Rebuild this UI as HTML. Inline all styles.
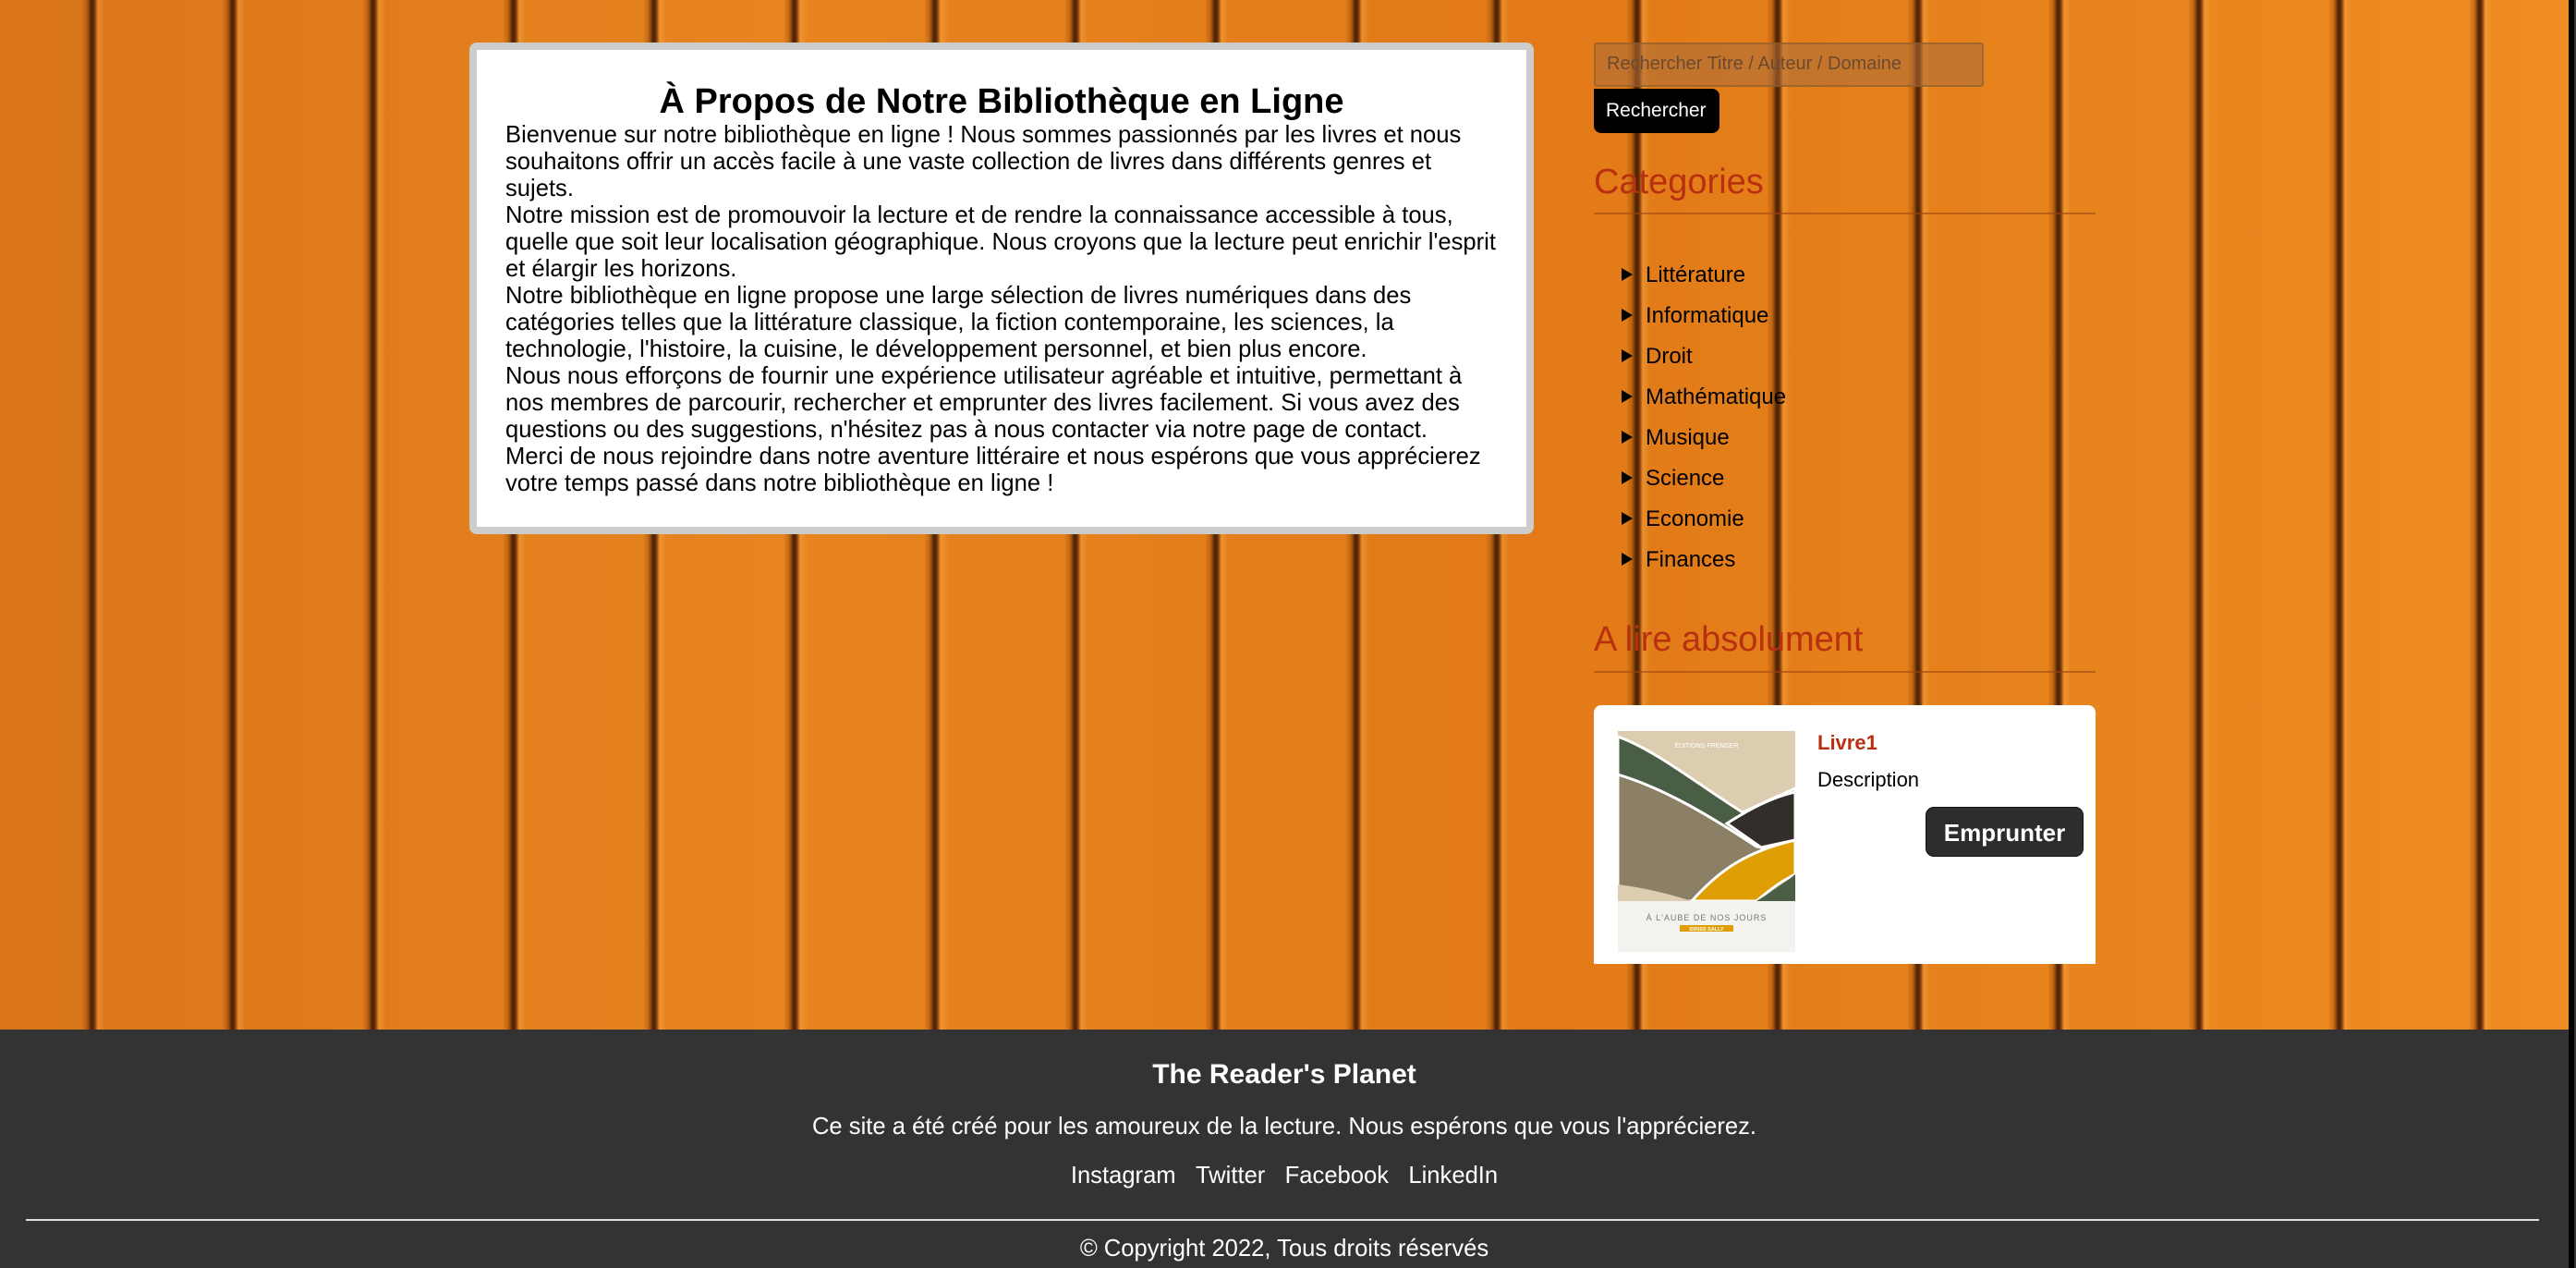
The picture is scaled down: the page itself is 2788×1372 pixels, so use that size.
<!DOCTYPE html>
<html><head><meta charset="utf-8">
<style>
*{margin:0;padding:0;box-sizing:border-box}
html,body{width:2788px;height:1372px;overflow:hidden}
body{font-family:"Liberation Sans",Arial,sans-serif;background:#333;position:relative}
.wood{position:absolute;left:0;top:0;width:2780px;height:1114px;
background:
repeating-linear-gradient(90deg,rgba(0,0,0,0) 0px,rgba(0,0,0,0) 88px,rgba(120,50,0,.35) 94px,#4a2205 99px,#6a3008 102px,rgba(255,180,80,.35) 106px,rgba(0,0,0,0) 114px,rgba(0,0,0,0) 152px),
linear-gradient(90deg,#d9741a,#e8851f 30%,#e17a17 60%,#ee8c22);
background-position:0 0}
.edge{position:absolute;left:2780px;top:0;width:6px;height:1372px;background:#000}
.edge2{position:absolute;left:2786px;top:0;width:2px;height:1372px;background:#333}
.about{position:absolute;left:508px;top:46px;width:1152px;height:532px;background:#fff;border:8px solid #ccc;border-radius:8px}
.about h1{position:absolute;left:0;right:0;top:34px;text-align:center;font-size:38px;font-weight:bold;line-height:44px}
.about .txt{position:absolute;left:31px;top:78px;font-size:25.6px;line-height:29px;white-space:nowrap;color:#000}
.search{position:absolute;left:1725px;top:46px;width:422px;height:48px;background:rgba(170,110,60,.55);border:2px solid rgba(140,90,40,.6);border-radius:3px;font-size:20px;color:#6b4a30;padding:10px 12px}
.btn{position:absolute;left:1725px;top:96px;width:136px;height:48px;background:#000;color:#fff;font-size:21px;border-radius:0 8px 8px 8px;padding:12px 13px}
h2{position:absolute;left:1725px;font-size:38px;font-weight:normal;color:#b8300f}
.hr{position:absolute;left:1725px;width:543px;height:2px;background:rgba(160,70,20,.6)}
ul{position:absolute;left:1755px;top:282px;list-style:none}
li{font-size:24px;height:44px;line-height:32px;color:#000;position:relative;padding-left:26px}
li:before{content:"";position:absolute;left:0;top:8px;border-left:12px solid #000;border-top:7px solid transparent;border-bottom:7px solid transparent}
.card{position:absolute;left:1725px;top:763px;width:543px;height:280px;background:#fff;border-radius:8px 8px 0 0}
.cover{position:absolute;left:26px;top:28px}
.t1{position:absolute;left:242px;top:28px;font-size:22px;font-weight:bold;color:#b8300f}
.t2{position:absolute;left:242px;top:68px;font-size:22px;color:#000}
.emp{position:absolute;left:359px;top:110px;width:171px;height:54px;background:#2d2d2d;color:#fff;font-weight:bold;font-size:26px;border-radius:9px;text-align:center;line-height:54px;border:1px solid #111}
.f{position:absolute;left:0;width:2780px;text-align:center;color:#fff}
</style></head><body>
<div class="wood"></div>
<div class="edge"></div><div class="edge2"></div>
<div class="about">
<h1>À Propos de Notre Bibliothèque en Ligne</h1>
<div class="txt">Bienvenue sur notre bibliothèque en ligne ! Nous sommes passionnés par les livres et nous<br>souhaitons offrir un accès facile à une vaste collection de livres dans différents genres et<br>sujets.<br>Notre mission est de promouvoir la lecture et de rendre la connaissance accessible à tous,<br>quelle que soit leur localisation géographique. Nous croyons que la lecture peut enrichir l'esprit<br>et élargir les horizons.<br>Notre bibliothèque en ligne propose une large sélection de livres numériques dans des<br>catégories telles que la littérature classique, la fiction contemporaine, les sciences, la<br>technologie, l'histoire, la cuisine, le développement personnel, et bien plus encore.<br>Nous nous efforçons de fournir une expérience utilisateur agréable et intuitive, permettant à<br>nos membres de parcourir, rechercher et emprunter des livres facilement. Si vous avez des<br>questions ou des suggestions, n'hésitez pas à nous contacter via notre page de contact.<br>Merci de nous rejoindre dans notre aventure littéraire et nous espérons que vous apprécierez<br>votre temps passé dans notre bibliothèque en ligne !</div>
</div>
<div class="search">Rechercher Titre / Auteur / Domaine</div>
<div class="btn">Rechercher</div>
<h2 style="top:176px">Categories</h2>
<div class="hr" style="top:230px"></div>
<ul><li>Littérature</li><li>Informatique</li><li>Droit</li><li>Mathématique</li><li>Musique</li><li>Science</li><li>Economie</li><li>Finances</li></ul>
<h2 style="top:671px">A lire absolument</h2>
<div class="hr" style="top:726px"></div>
<div class="card">
<svg class="cover" width="192" height="239" viewBox="0 0 192 239">
<rect width="192" height="239" fill="#dccdb0"/>
<path d="M0,6 C40,20 90,60 135,88 L192,62 L192,184 L0,184Z" fill="#4a5e45" stroke="#fff" stroke-width="3"/>
<path d="M0,47 C50,62 100,92 150,125 L192,132 L192,184 L0,184Z" fill="#8b8065" stroke="#fff" stroke-width="3"/>
<path d="M118,100 C140,86 165,72 192,66 L192,118 L155,126Z" fill="#332e29" stroke="#fff" stroke-width="3"/>
<path d="M80,184 C110,150 140,130 192,118 L192,155 C172,165 160,176 150,184Z" fill="#e09e05" stroke="#fff" stroke-width="3"/>
<path d="M150,184 C165,175 180,165 192,155 L192,184Z" fill="#4a5e45"/>
<path d="M0,166 C30,170 55,176 80,184 L0,184Z" fill="#dccdb0"/>
<rect y="184" width="192" height="55" fill="#f4f2ee"/>
<text x="96" y="18" font-size="7" fill="#fff" text-anchor="middle" font-family="Liberation Sans">ÉDITIONS FRENGER</text>
<text x="96" y="205" font-size="9" fill="#777" text-anchor="middle" font-family="Liberation Sans" letter-spacing="1">À L'AUBE DE NOS JOURS</text>
<rect x="67" y="210" width="58" height="7" fill="#e09e05"/>
<text x="96" y="216" font-size="5.5" fill="#fff" text-anchor="middle" font-family="Liberation Sans" font-weight="bold">IDRISS SALLY</text>
</svg>
<div class="t1">Livre1</div>
<div class="t2">Description</div>
<div class="emp">Emprunter</div>
</div>
<div class="f" style="top:1146px;font-size:30px;font-weight:bold">The Reader's Planet</div>
<div class="f" style="top:1205px;font-size:25.6px">Ce site a été créé pour les amoureux de la lecture. Nous espérons que vous l'apprécierez.</div>
<div class="f" style="top:1258px;font-size:25.6px">Instagram&nbsp;&nbsp;&nbsp;Twitter&nbsp;&nbsp;&nbsp;Facebook&nbsp;&nbsp;&nbsp;LinkedIn</div>
<div style="position:absolute;left:28px;top:1319px;width:2720px;height:2px;background:#ddd"></div>
<div class="f" style="top:1337px;font-size:25.6px">© Copyright 2022, Tous droits réservés</div>
</body></html>
